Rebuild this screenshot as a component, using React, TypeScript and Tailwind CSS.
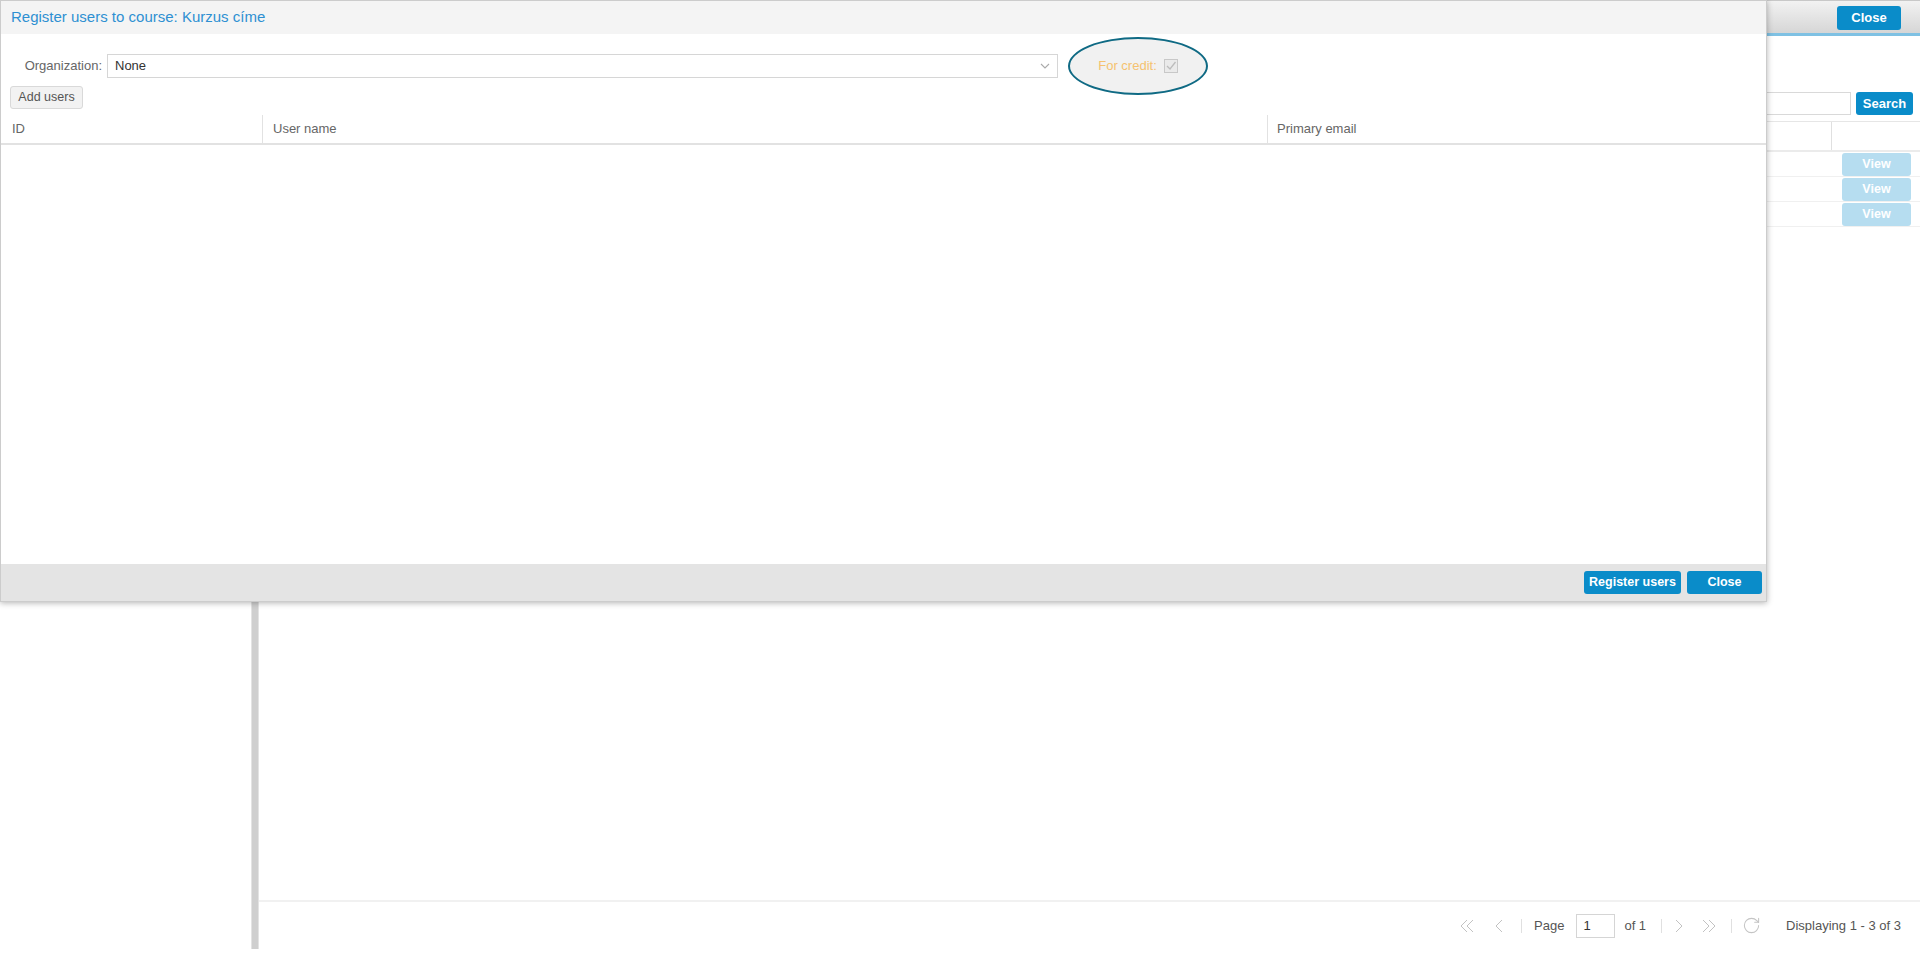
import { RotateCw } from 'lucide-react'

const FONT = { fontFamily: '"Liberation Sans", Arial, sans-serif' }

function Chevron({ dir, double }: { dir: 'l' | 'r'; double?: boolean }) {
  const one = dir === 'l' ? 'M11 2 L5 8 L11 14' : 'M5 2 L11 8 L5 14'
  const two = dir === 'l' ? 'M8 2 L2 8 L8 14 M14 2 L8 8 L14 14' : 'M2 2 L8 8 L2 14 M8 2 L14 8 L8 14'
  return (
    <svg width="16" height="16" viewBox="0 0 16 16" className="shrink-0">
      <path d={double ? two : one} fill="none" stroke="#c2c2c2" strokeWidth="1" />
    </svg>
  )
}

function Sep() {
  return <div className="w-px h-[14px] bg-[#e0e0e0] shrink-0" />
}

function BlueBtn({ children, className = '' }: { children: React.ReactNode; className?: string }) {
  return (
    <button className={`h-[23px] rounded-[3px] bg-[#0a8cc9] text-white text-[12.5px] font-bold flex items-center justify-center ${className}`}>
      {children}
    </button>
  )
}

function Background() {
  return (
    <div className="h-[953px] flex flex-col bg-white">
      {/* top bar */}
      <div className="h-[36px] shrink-0 flex items-start justify-end pr-[19px] pt-[5px] bg-gradient-to-b from-[#f2f2f2] to-[#d6d6d6] border-t border-[#c8c8c8] border-b-[3px] border-b-[#7fc1e3]">
        <BlueBtn className="w-[64px] h-[24px] text-[13px]">Close</BlueBtn>
      </div>

      <div className="flex-1 flex mb-[4px]">
        <div className="w-[251px] shrink-0" />
        <div className="w-[8px] shrink-0 bg-[#cfcfcf] border-x border-[#e3e3e3]" />

        <div className="flex-1 flex flex-col">
          {/* search */}
          <div className="flex justify-end items-center gap-[5px] pr-[7px] mt-[56px]">
            <div className="w-[400px] h-[23px] border border-[#d9d9d9]" />
            <BlueBtn className="w-[57px] text-[13px]">Search</BlueBtn>
          </div>

          {/* grid */}
          <div className="mt-[6px] border-t border-[#e6e6e6]">
            <div className="h-[30px] flex border-b-2 border-[#ebebeb]">
              <div className="flex-1" />
              <div className="w-[89px] border-l border-[#e0e0e0]" />
            </div>
            {[0, 1, 2].map((i) => (
              <div key={i} className="h-[25px] flex items-center justify-end pr-[9px] border-b border-[#f0f0f0]">
                <button className="w-[69px] h-[23px] rounded-[3px] bg-[#b6ddf0] text-white text-[12.5px] font-bold">View</button>
              </div>
            ))}
          </div>

          <div className="flex-1" />

          {/* paging */}
          <div className="h-[49px] border-t-2 border-[#f1f1f1] flex items-center justify-end pr-[19px] text-[13px] text-[#555]">
            <Chevron dir="l" double />
            <div className="ml-[16px]"><Chevron dir="l" /></div>
            <div className="ml-[14px]"><Sep /></div>
            <span className="ml-[12px]">Page</span>
            <div className="ml-[12px] w-[39px] h-[24px] border border-[#d5d5d5] flex items-center pl-[6px] text-[#333]">1</div>
            <span className="ml-[9px]">of 1</span>
            <div className="ml-[15px]"><Sep /></div>
            <div className="ml-[9px]"><Chevron dir="r" /></div>
            <div className="ml-[14px]"><Chevron dir="r" double /></div>
            <div className="ml-[14px]"><Sep /></div>
            <RotateCw className="ml-[10px] w-[19px] h-[19px] text-[#c4c4c4]" strokeWidth={1.3} />
            <span className="ml-[25px]">Displaying 1 - 3 of 3</span>
          </div>
        </div>
      </div>
    </div>
  )
}

function Modal() {
  return (
    <div className="absolute left-0 top-0 w-[1767px] h-[602px] flex flex-col bg-white border border-[#cccccc] shadow-[0_1px_6px_rgba(0,0,0,0.3)]">
      {/* title */}
      <div className="h-[33px] shrink-0 bg-[#f4f4f4] flex items-center pl-[10px] text-[15px] text-[#2e90d2]">
        Register users to course: Kurzus címe
      </div>

      <div className="flex-1 flex flex-col pt-[20px]">
        {/* organization row */}
        <div className="h-[24px] flex items-center">
          <div className="w-[101px] text-right text-[13px] text-[#666]">Organization:</div>
          <div className="ml-[5px] w-[951px] h-[24px] border border-[#d6d6d6] flex items-center justify-between pl-[7px] pr-[6px] text-[13px] text-[#333]">
            <span>None</span>
            <svg width="12" height="12" viewBox="0 0 12 12">
              <path d="M2 4 L6 8 L10 4" fill="none" stroke="#aaa" strokeWidth="1.1" />
            </svg>
          </div>
          <div className="ml-[10px] w-[140px] h-[58px] shrink-0 rounded-[50%] border-2 border-[#0f6a84] bg-[#f1f1f1] flex items-center justify-center gap-[7px]">
            <span className="text-[13px] text-[#f5c26f]">For credit:</span>
            <svg width="14" height="14" viewBox="0 0 14 14">
              <rect x="0.5" y="0.5" width="13" height="13" fill="#eaeaea" stroke="#c8c8c8" />
              <path d="M3 7 L6 10 L11.5 3" fill="none" stroke="#bcbcbc" strokeWidth="1.3" />
            </svg>
          </div>
        </div>

        {/* add users */}
        <div className="mt-[6px] pl-[9px]">
          <button className="h-[23px] w-[73px] rounded-[3px] bg-[#f2f2f2] border border-[#d9d9d9] text-[12.5px] text-[#555]">Add users</button>
        </div>

        {/* grid header */}
        <div className="mt-[6px] h-[30px] flex border-b-2 border-[#e2e2e2] text-[13px] text-[#666]">
          <div className="w-[261px] flex items-center pl-[11px]">ID</div>
          <div className="w-[1005px] flex items-center pl-[10px] border-l border-[#e2e2e2]">User name</div>
          <div className="flex-1 flex items-center pl-[9px] border-l border-[#e2e2e2]">Primary email</div>
        </div>

        <div className="flex-1" />

        {/* footer */}
        <div className="h-[37px] shrink-0 bg-[#e4e4e4] flex items-center justify-end gap-[6px] pr-[4px]">
          <BlueBtn className="w-[97px]">Register users</BlueBtn>
          <BlueBtn className="w-[75px]">Close</BlueBtn>
        </div>
      </div>
    </div>
  )
}

export default function App() {
  return (
    <div className="relative w-[1920px] h-[953px] overflow-hidden" style={FONT}>
      <Background />
      <Modal />
    </div>
  )
}
